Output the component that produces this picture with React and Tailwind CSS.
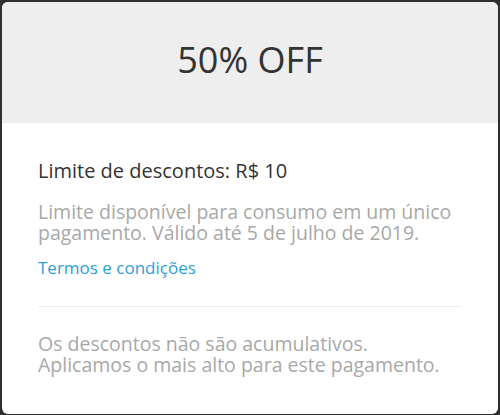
export default function App() {
  return (
    <div className="w-[500px] h-[415px] bg-[#2f2f2f] px-[2px] pt-[2px] pb-[1px]" style={{ fontFamily: '"Open Sans", sans-serif' }}>
      <div className="w-full h-full bg-white rounded-[6px] overflow-hidden flex flex-col">
        <div className="h-[121px] shrink-0 bg-[#eeeeee] flex justify-center pt-[40px]">
          <span className="text-[36px] text-[#333333] leading-[36px]">50% OFF</span>
        </div>
        <div className="px-[36px] pt-[35px]">
          <div className="text-[20px] leading-[25px] text-[#333333]">Limite de descontos: R$ 10</div>
          <div className="mt-[18px] text-[19.5px] leading-[21px] text-[#a8a8a8]">
            Limite disponível para consumo em um único pagamento. Válido até 5 de julho de 2019.
          </div>
          <div className="mt-[14px] text-[17px] leading-[22px] text-[#2d9fd8]">Termos e condições</div>
          <div className="mt-[27px] h-px bg-[#eeeeee]" />
          <div className="mt-[26px] text-[19.5px] leading-[21px] text-[#a8a8a8]">
            Os descontos não são acumulativos.
            <br />
            Aplicamos o mais alto para este pagamento.
          </div>
        </div>
      </div>
    </div>
  );
}
